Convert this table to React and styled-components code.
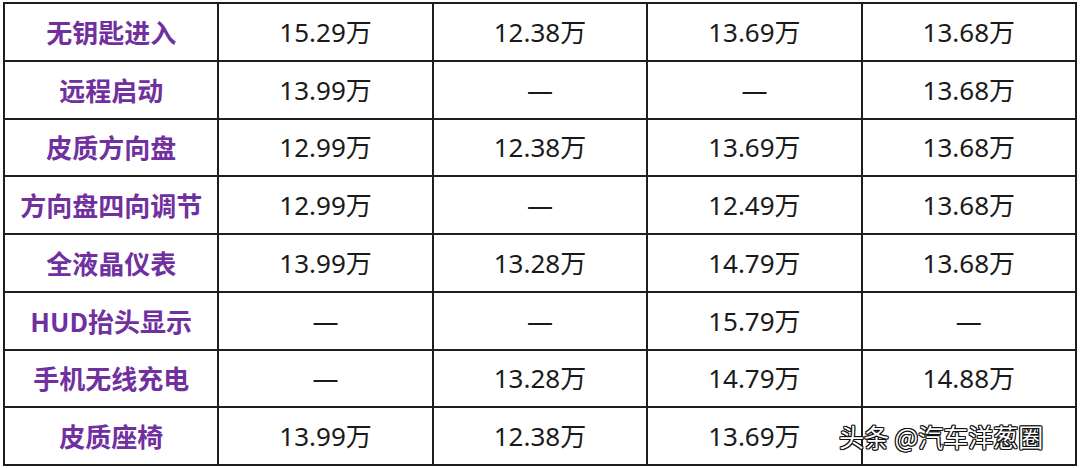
import React from 'react';
import styled, { createGlobalStyle } from 'styled-components';

const GlobalStyle = createGlobalStyle`
  html, body {
    margin: 0;
    padding: 0;
    background: #ffffff;
  }
  body {
    font-family: "Noto Sans CJK SC", "Noto Sans", sans-serif;
  }
`;

const Page = styled.div`
  position: relative;
  width: 1080px;
  height: 468px;
  padding: 2px 0 0 3px;
  box-sizing: border-box;
  background: #fff;
`;

const Table = styled.div`
  display: grid;
  grid-template-columns: repeat(5, 1fr);
  grid-template-rows: repeat(8, 1fr);
  gap: 2px;
  width: 1074px;
  height: 464px;
  padding: 2px;
  box-sizing: border-box;
  background: #1e1e1e;
`;

const Cell = styled.div`
  display: flex;
  align-items: center;
  justify-content: center;
  background: #fff;
  font-size: 26px;
  line-height: 1;
  white-space: nowrap;
  color: ${({ $label }) => ($label ? '#7030a0' : '#1a1a1a')};
  font-weight: ${({ $label }) => ($label ? 700 : 400)};
  font-family: ${({ $label }) =>
    $label
      ? '"Noto Sans CJK SC", "Noto Sans", sans-serif'
      : '"Noto Sans", "Noto Sans CJK SC", sans-serif'};
`;

// watermark sits over the last row, white glyphs with a dark outline
const Watermark = styled.div`
  position: absolute;
  left: 839px;
  top: 420px;
  font-family: "Noto Sans CJK SC", sans-serif;
  font-size: 25px;
  line-height: 32px;
  color: #fff;
  white-space: nowrap;
  text-shadow:
    -1px -1px 0 #111, 1px -1px 0 #111, -1px 1px 0 #111, 1px 1px 0 #111,
    0 -1px 0 #111, 0 1px 0 #111, -1px 0 0 #111, 1px 0 0 #111;
`;

const rows = [
  ['无钥匙进入', '15.29万', '12.38万', '13.69万', '13.68万'],
  ['远程启动', '13.99万', '—', '—', '13.68万'],
  ['皮质方向盘', '12.99万', '12.38万', '13.69万', '13.68万'],
  ['方向盘四向调节', '12.99万', '—', '12.49万', '13.68万'],
  ['全液晶仪表', '13.99万', '13.28万', '14.79万', '13.68万'],
  ['HUD抬头显示', '—', '—', '15.79万', '—'],
  ['手机无线充电', '—', '13.28万', '14.79万', '14.88万'],
  ['皮质座椅', '13.99万', '12.38万', '13.69万', ''],
];

export default function App() {
  return (
    <>
      <GlobalStyle />
      <Page>
        <Table>
          {rows.map((row, r) =>
            row.map((text, c) => (
              <Cell key={r + '-' + c} $label={c === 0}>
                {text}
              </Cell>
            ))
          )}
        </Table>
        <Watermark>头条 @汽车洋葱圈</Watermark>
      </Page>
    </>
  );
}
